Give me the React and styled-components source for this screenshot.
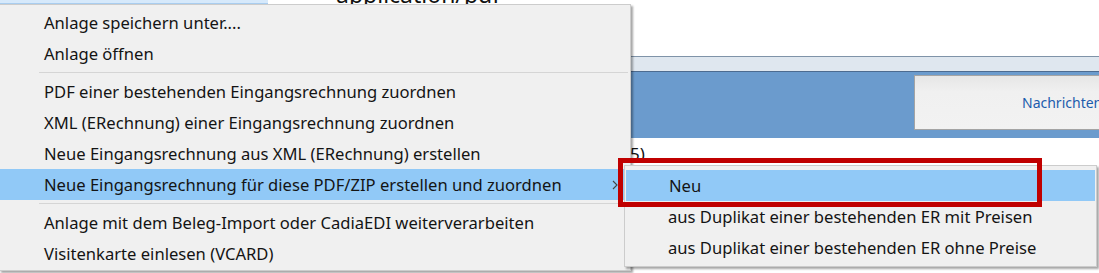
import React from "react";
import styled, { createGlobalStyle } from "styled-components";

const Global = createGlobalStyle`
  html, body { margin: 0; padding: 0; background: #ffffff; }
  body { font-family: "Noto Sans", "Open Sans", sans-serif; overflow: hidden; }
`;

const Page = styled.div`
  position: relative;
  width: 1099px;
  height: 273px;
  overflow: hidden;
  background: #ffffff;
`;

const Backdrop = styled.div`
  display: flex;
  flex-direction: column;
  height: 100%;
`;

const TopRow = styled.div`
  display: flex;
  align-items: flex-start;
  height: 56px;
  overflow: hidden;
`;

const SelectedCell = styled.div`
  width: 268px;
  height: 3px;
  background: #d6e9fb;
  border-bottom: 1px solid #a9cdef;
  flex: none;
`;

const CellText = styled.div`
  margin-left: 68px;
  margin-top: -19px;
  font-size: 23px;
  line-height: 26px;
  color: #111;
`;

const ToolStrip = styled.div`
  height: 14px;
  background: #dfe7ef;
  border-top: 1px solid #7f93a8;
  border-bottom: 1px solid #4c6b90;
`;

const BlueBand = styled.div`
  height: 66px;
  background: #6b9bcd;
  display: flex;
  justify-content: flex-end;
  padding-top: 3px;
  box-sizing: border-box;
`;

const NewsPanel = styled.div`
  width: 185px;
  height: 55px;
  box-sizing: border-box;
  border: 1px solid #a4a4a4;
  border-right: none;
  background: linear-gradient(#e6e6e6 0%, #f0f0f0 30%, #f2f2f2 100%);
  display: flex;
  align-items: center;
  padding-left: 107px;
  font-size: 14px;
  color: #1c5cad;
  white-space: nowrap;
`;

const Content = styled.div`
  flex: 1;
  position: relative;
  padding-left: 630px;
  padding-top: 6px;
  font-size: 17px;
  color: #111;
  line-height: 20px;
`;

const Menu = styled.div`
  position: absolute;
  left: ${(p) => p.$left}px;
  top: ${(p) => p.$top}px;
  width: ${(p) => p.$width}px;
  box-sizing: border-box;
  background: #f0f0f0;
  border: 1px solid #cccccc;
  padding: ${(p) => p.$pad};
  box-shadow: 2px 2px 2px rgba(0, 0, 0, 0.35);
  font-family: "Noto Sans", "Open Sans", sans-serif;
  font-size: 16.6px;
  color: #141414;
`;

const Item = styled.div`
  position: relative;
  display: flex;
  align-items: center;
  height: 31px;
  padding-left: ${(p) => p.$indent}px;
  margin: 0 ${(p) => (p.$inset ? 1 : 0)}px;
  background: ${(p) => (p.$active ? "#91c9f7" : "transparent")};
  white-space: nowrap;
`;

const Separator = styled.div`
  height: 7px;
  display: flex;
  align-items: center;
  padding-left: 39px;
  padding-right: 2px;
  &::after {
    content: "";
    flex: 1;
    height: 1px;
    background: #d5d5d5;
  }
`;

const Chevron = styled.svg`
  position: absolute;
  right: 12px;
  top: 11px;
`;

const Annotation = styled.div`
  position: absolute;
  left: 618px;
  top: 158px;
  width: 424px;
  height: 49px;
  box-sizing: border-box;
  border: 5px solid #c00000;
`;

export default function App() {
  return (
    <Page>
      <Global />
      <Backdrop>
        <TopRow>
          <SelectedCell />
          <CellText>application/pdf</CellText>
        </TopRow>
        <ToolStrip />
        <BlueBand>
          <NewsPanel>Nachrichten</NewsPanel>
        </BlueBand>
        <Content>5)</Content>
      </Backdrop>

      <Menu $left={-1} $top={4} $width={632} $pad="2px 0 1px">
        <Item $indent={44}>Anlage speichern unter....</Item>
        <Item $indent={44}>Anlage öffnen</Item>
        <Separator />
        <Item $indent={44}>PDF einer bestehenden Eingangsrechnung zuordnen</Item>
        <Item $indent={44}>XML (ERechnung) einer Eingangsrechnung zuordnen</Item>
        <Item $indent={44}>Neue Eingangsrechnung aus XML (ERechnung) erstellen</Item>
        <Item $indent={44} $active>
          Neue Eingangsrechnung für diese PDF/ZIP erstellen und zuordnen
          <Chevron width="6" height="10" viewBox="0 0 6 10">
            <path d="M1 1 L5 5 L1 9" fill="none" stroke="#444" strokeWidth="1.1" />
          </Chevron>
        </Item>
        <Separator />
        <Item $indent={44}>Anlage mit dem Beleg-Import oder CadiaEDI weiterverarbeiten</Item>
        <Item $indent={44}>Visitenkarte einlesen (VCARD)</Item>
      </Menu>

      <Menu $left={624} $top={165} $width={473} $pad="4px 0 3px">
        <Item $indent={43} $inset $active>Neu</Item>
        <Item $indent={43}>aus Duplikat einer bestehenden ER mit Preisen</Item>
        <Item $indent={43}>aus Duplikat einer bestehenden ER ohne Preise</Item>
      </Menu>

      <Annotation />
    </Page>
  );
}
